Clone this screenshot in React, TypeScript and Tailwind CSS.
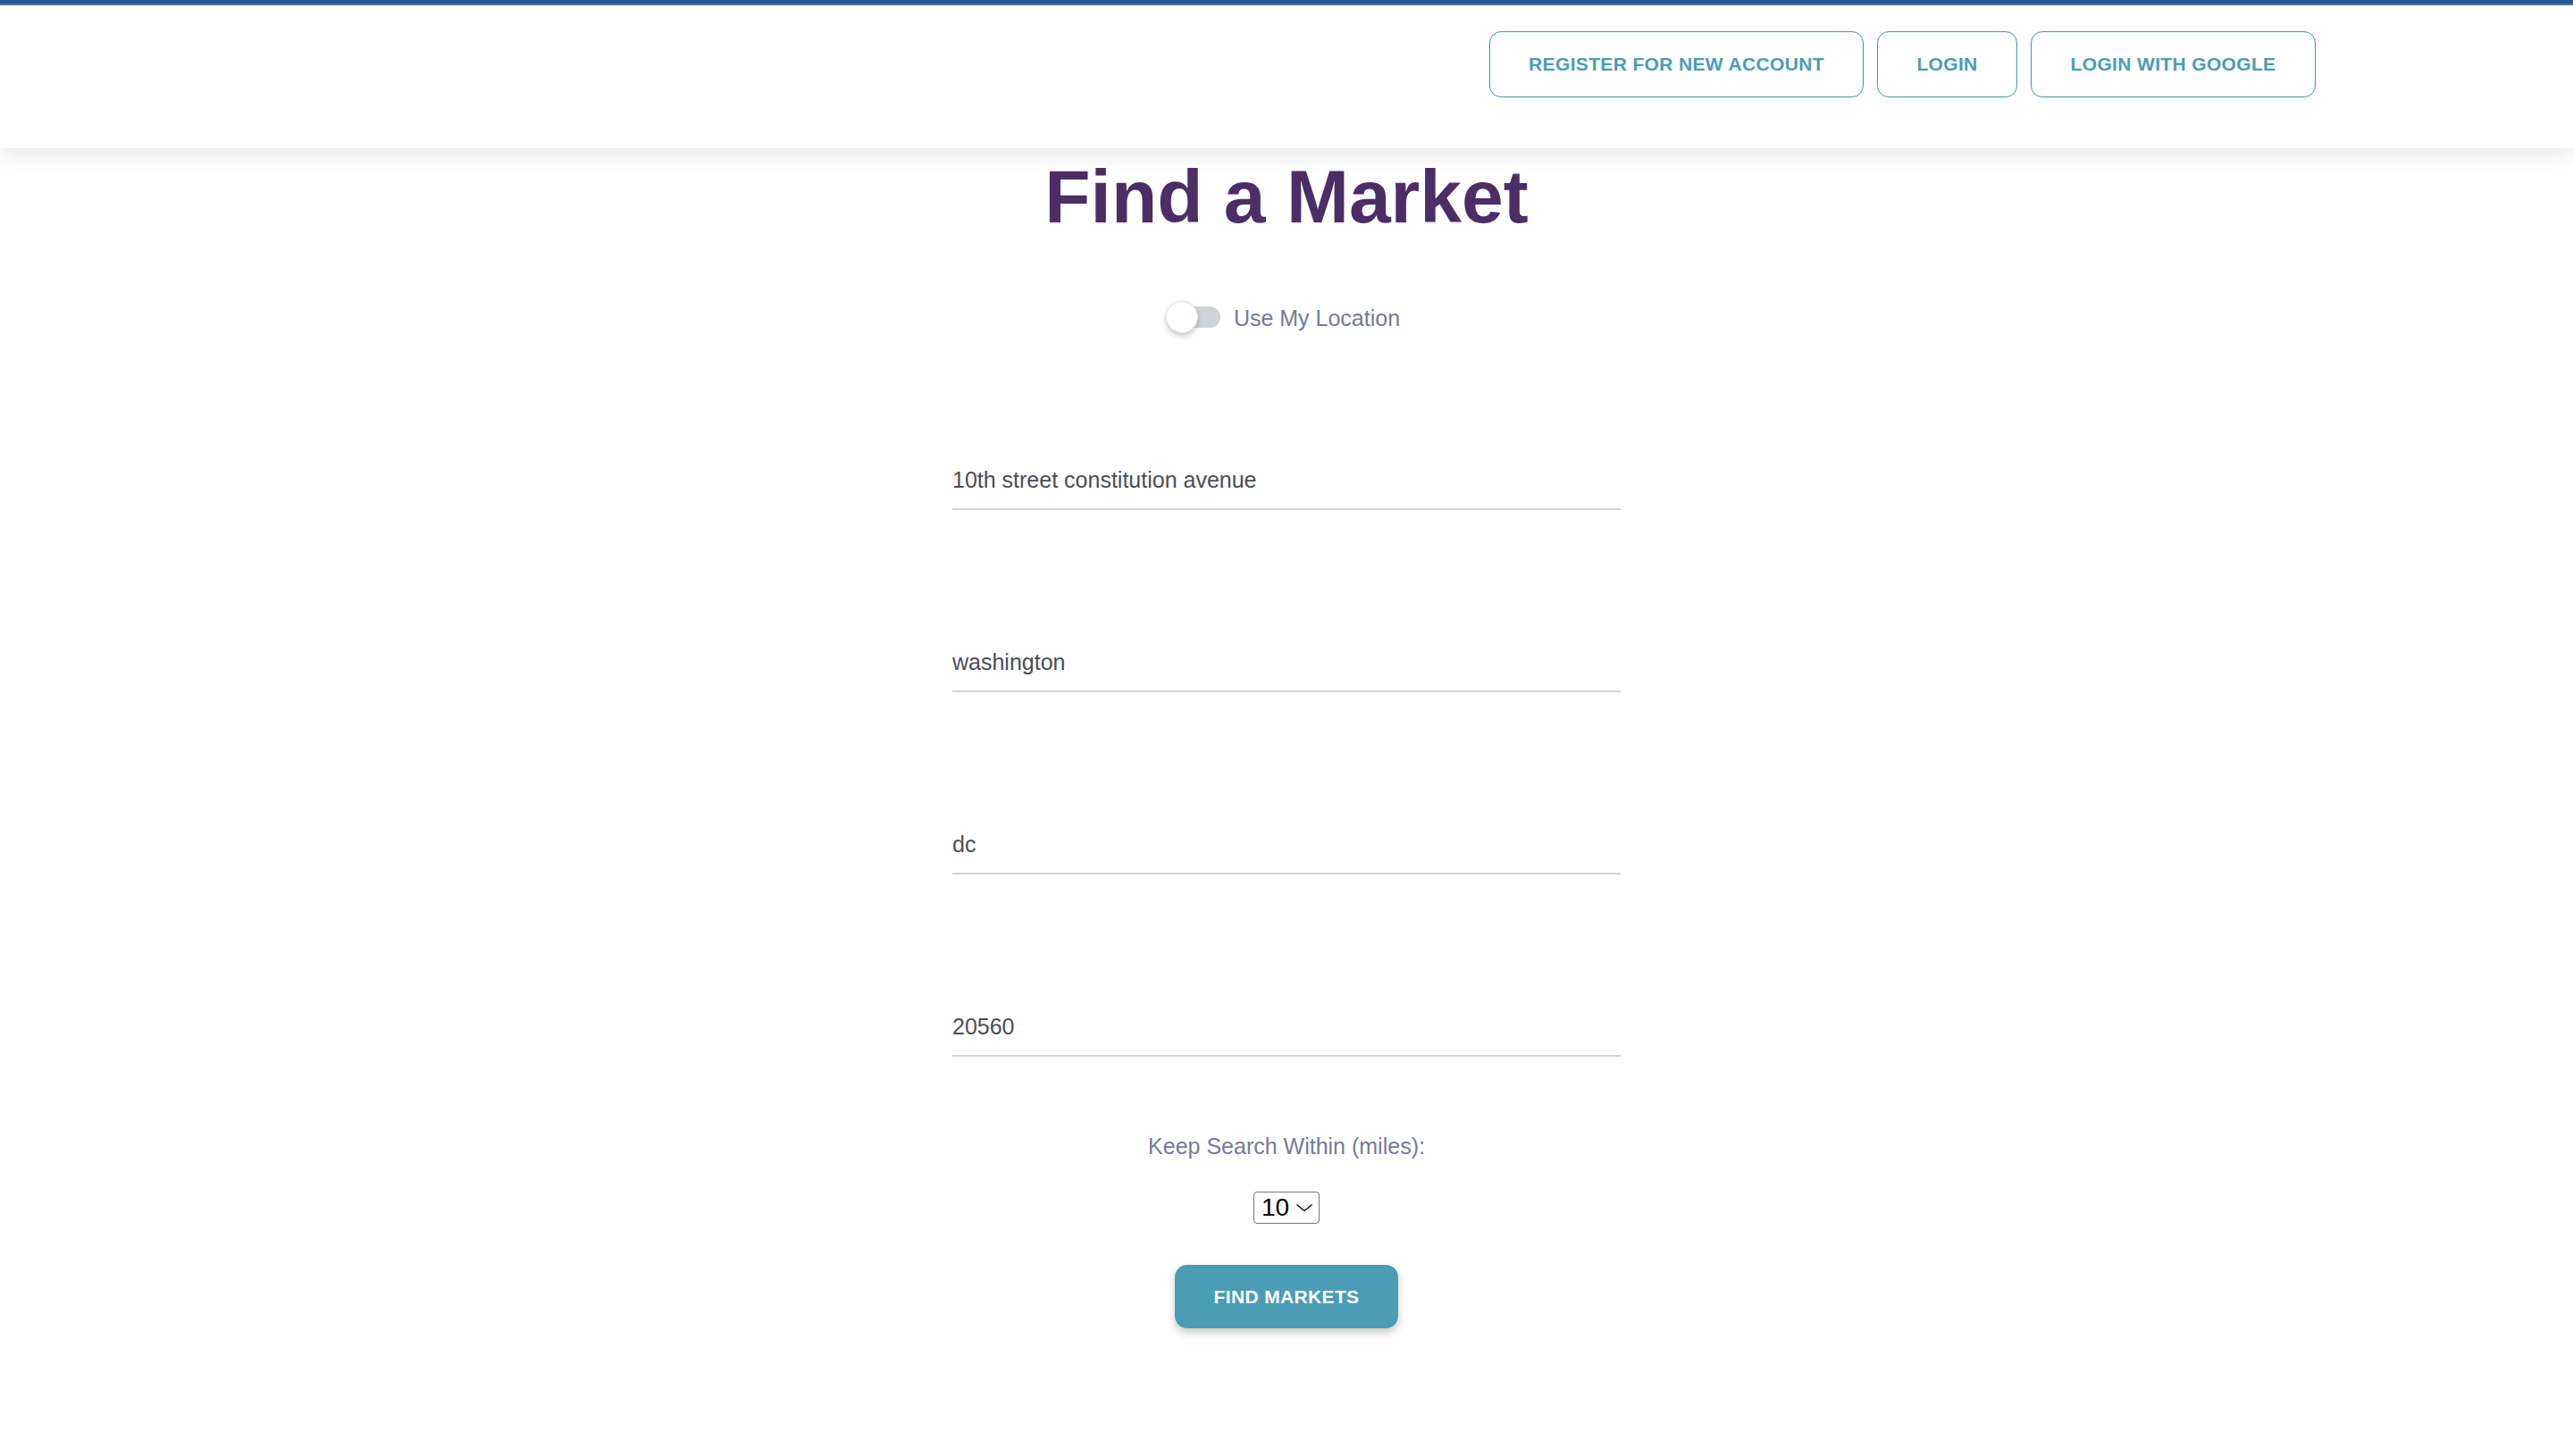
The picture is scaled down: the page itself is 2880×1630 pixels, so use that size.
import { useState } from 'react';

export default function App() {
  const [useLocation, setUseLocation] = useState(false);
  const [street, setStreet] = useState('10th street constitution avenue');
  const [city, setCity] = useState('washington');
  const [state, setState] = useState('dc');
  const [zip, setZip] = useState('20560');
  const [radius, setRadius] = useState('10');

  const fields = [
    { value: street, set: setStreet },
    { value: city, set: setCity },
    { value: state, set: setState },
    { value: zip, set: setZip },
  ];

  return (
    <div className="min-h-screen bg-white font-['Liberation_Sans',Arial,sans-serif]">
      {/* Header */}
      <header className="relative z-10 bg-white shadow-[0_6px_22px_rgba(0,0,0,0.11)]">
        <div className="h-[4px] bg-[#2b5297]" />
        <div className="h-[2px] bg-[#4b74a9]" />
        <nav className="flex h-[160px] justify-end gap-[15px] pr-[288px] pt-[29px]">
          <button className="h-[74px] w-[419px] rounded-[13px] border border-[#3f97b0] text-[21px] font-bold tracking-[0.35px] text-[#4a9db4]">
            REGISTER FOR NEW ACCOUNT
          </button>
          <button className="h-[74px] w-[157px] rounded-[13px] border border-[#3f97b0] text-[21px] font-bold tracking-[0.35px] text-[#4a9db4]">
            LOGIN
          </button>
          <button className="h-[74px] w-[319px] rounded-[13px] border border-[#3f97b0] text-[21px] font-bold tracking-[0.35px] text-[#4a9db4]">
            LOGIN WITH GOOGLE
          </button>
        </nav>
      </header>

      <main className="flex flex-col items-center pb-[140px]">
        <h1 className="mt-[12px] text-[84px] font-bold leading-none text-[#4b2e66]">Find a Market</h1>

        {/* Use my location switch */}
        <label className="mr-[8px] mt-[75px] flex h-[36px] cursor-pointer items-center gap-[15px]">
          <span className="relative h-[36px] w-[61px]">
            <span
              className={
                useLocation
                  ? 'absolute left-[5px] top-[6px] h-[24px] w-[56px] rounded-full bg-[#9fd0de]'
                  : 'absolute left-[5px] top-[6px] h-[24px] w-[56px] rounded-full bg-[#cfd3d8]'
              }
            />
            <span
              className={
                useLocation
                  ? 'absolute left-[25px] top-0 h-[36px] w-[36px] rounded-full border border-[#e4e4e4] bg-[#4a9db4] shadow-[0_3px_6px_rgba(0,0,0,0.22)]'
                  : 'absolute left-0 top-0 h-[36px] w-[36px] rounded-full border border-[#e4e4e4] bg-white shadow-[0_3px_6px_rgba(0,0,0,0.22)]'
              }
            />
            <input
              type="checkbox"
              className="sr-only"
              checked={useLocation}
              onChange={() => setUseLocation(!useLocation)}
            />
          </span>
          <span className="mt-[3px] text-[25px] leading-none text-[#767a98]">Use My Location</span>
        </label>

        {/* Address fields */}
        <div className="mt-[132px] flex w-[748px] flex-col gap-[138px]">
          {fields.map((f, i) => (
            <input
              key={i}
              value={f.value}
              onChange={(e) => f.set(e.target.value)}
              className="h-[66px] w-full border-b-2 border-[#d3d3d3] bg-transparent text-[25px] text-[#4a4d57] outline-none"
            />
          ))}
        </div>

        <p className="mt-[88px] text-[25px] leading-none text-[#767a98]">Keep Search Within (miles):</p>

        <div className="relative mt-[38px] h-[36px] w-[74px]">
          <select
            value={radius}
            onChange={(e) => setRadius(e.target.value)}
            className="h-[36px] w-[74px] appearance-none rounded-[4px] border border-[#767676] bg-white pl-[8px] text-[28px] leading-none text-black outline-none"
          >
            <option value="5">5</option>
            <option value="10">10</option>
            <option value="25">25</option>
            <option value="50">50</option>
          </select>
          <svg
            className="pointer-events-none absolute left-[47px] top-[13px]"
            width="20"
            height="10"
            viewBox="0 0 20 10"
            fill="none"
          >
            <path d="M2 2 L10 8.5 L18 2" stroke="#111" strokeWidth="1.6" strokeLinecap="round" strokeLinejoin="round" />
          </svg>
        </div>

        <button className="mt-[46px] h-[71px] w-[250px] rounded-[14px] bg-[#4a9db4] text-[21px] font-bold tracking-[0.35px] text-white shadow-[0_5px_10px_rgba(0,0,0,0.22)]">
          FIND MARKETS
        </button>
      </main>
    </div>
  );
}
